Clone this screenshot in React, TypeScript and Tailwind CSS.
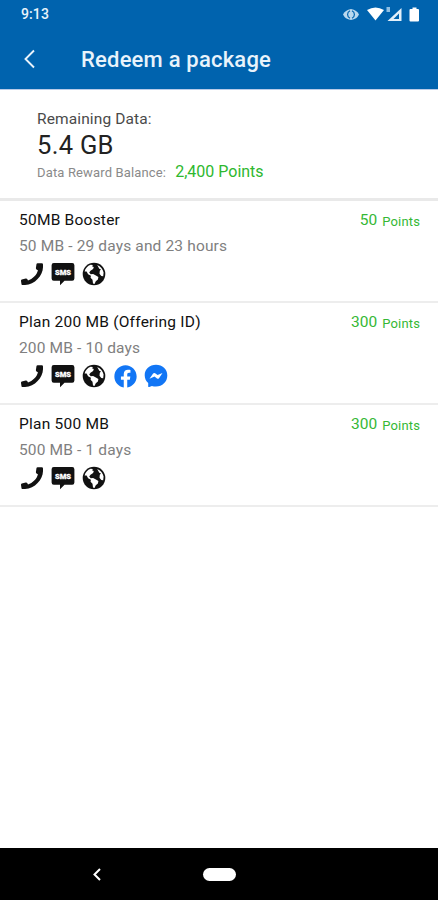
import { FaFacebook } from "react-icons/fa";

type Service = "call" | "sms" | "web" | "facebook" | "messenger";

interface Plan {
  name: string;
  details: string;
  points: number;
  services: Service[];
}

const plans: Plan[] = [
  {
    name: "50MB Booster",
    details: "50 MB - 29 days and 23 hours",
    points: 50,
    services: ["call", "sms", "web"],
  },
  {
    name: "Plan 200 MB (Offering ID)",
    details: "200 MB - 10 days",
    points: 300,
    services: ["call", "sms", "web", "facebook", "messenger"],
  },
  {
    name: "Plan 500 MB",
    details: "500 MB - 1 days",
    points: 300,
    services: ["call", "sms", "web"],
  },
];

const CallIcon = () => (
  <svg width="24" height="24" viewBox="0 0 24 24" fill="#111">
    <path d="M17.600 1.200 21.800 1.300q1.200 0 1.200 1.300v2.600C22.700 13.500 15 22.600 5 23l-2.300.1q-1 0-1.200-.9L1 19q-.2-1.100.8-1.400l4-1.100q.9-.2 1.400.6l.8 1.300C12.500 17.200 16.900 13 17.900 8.300l-1.400-.9q-.7-.5-.6-1.300l.6-4q.2-.9 1.100-.9z" />
  </svg>
);

const SmsIcon = () => (
  <svg width="24" height="24" viewBox="0 0 24 24">
    <path
      d="M2.800 1h18.400a2.200 2.200 0 0 1 2.200 2.200v13.300a2.200 2.200 0 0 1-2.200 2.200H13.500L9 23.200v-4.500H2.800a2.200 2.200 0 0 1-2.200-2.200V3.200A2.200 2.200 0 0 1 2.800 1z"
      fill="#111"
    />
    <text
      x="4"
      y="12.700"
      textLength="16"
      lengthAdjust="spacingAndGlyphs"
      fontSize="8"
      fontWeight="900"
      fill="#fff"
      stroke="#fff"
      strokeWidth="0.300"
      className="font-['Roboto',sans-serif]"
    >
      SMS
    </text>
  </svg>
);

const GlobeIcon = () => (
  <svg width="24" height="24" viewBox="0 0 24 24">
    <circle cx="12" cy="12" r="11.300" fill="#111" />
    <g fill="#fff">
      <path d="M2.600 9.500C3.300 6.500 5.500 3.900 8.600 2.800l2.200.2-.6 1.600 1.600.5-.7 2-2.600 1.600-1.300 1.900 1.500 1.700 2.400-.2 2.800 1.500 2.500 1.400-.5 2.600-2.100 1.600-1.300 2.900-1.500-.6-.5-3.700-1.900-2.100.3-2-2.800-1.500L4.600 9.400z" />
      <path d="M15.200 2.900C18.500 4.100 21 7.200 21.600 10.600l-.4 3.600-1.900-.3-1.800-2.200.3-2.900 1.200-1.300-1.700-.8z" />
    </g>
  </svg>
);

const MessengerIcon = () => (
  <svg width="24" height="24" viewBox="0 0 24 24">
    <path
      d="M12 .8C5.600.8.700 5.300.7 11.300c0 3.200 1.300 5.900 3.500 7.800v3.100q0 1.200 1.100.8l2.600-1.100c1.300.4 2.700.5 4.100.5 6.400 0 11.300-4.700 11.300-11S18.400.8 12 .8z"
      fill="#1276f5"
    />
    <path d="m5.500 14.700 3.600-5.200q.9-1 2-.3l2.500 1.900 4.900-2-3.500 5.100q-.9 1.100-2 .3L10.500 12.600z" fill="#fff" />
  </svg>
);

const ServiceIcon = ({ service }: { service: Service }) => {
  switch (service) {
    case "call":
      return <CallIcon />;
    case "sms":
      return <SmsIcon />;
    case "web":
      return <GlobeIcon />;
    case "facebook":
      return <FaFacebook size={23} color="#1276f5" />;
    case "messenger":
      return <MessengerIcon />;
  }
};

const StatusBar = () => (
  <div className="flex h-[29px] items-center justify-between pl-[21px] pr-[17px]">
    <span className="text-[14px] font-medium tracking-[0.1px]">9:13</span>
    <svg width="78" height="18" viewBox="0 0 78 18" fill="#fff">
      {/* eye */}
      <path d="M0 8.500q2-4.500 8-5.500 6 1 8 5.500-2 4.500-8 5.500-6-1-8-5.500z" fill="#b9d8ef" />
      <path d="M7 4.700a4.200 4.200 0 0 0 0 7.600M9 4.700a4.200 4.200 0 0 1 0 7.600" fill="none" stroke="#0063ae" strokeWidth="1.200" />
      {/* wifi */}
      <path d="M24 4q8.500-5 17 0L32.500 14.500z" />
      {/* signal */}
      <path d="M58.500 2v13H44.500z" fill="#e3f0fa" />
      <path d="M56 7.500V13h-5.500z" fill="#0063ae" />
      <path d="M43.500 1h3.500v5h-3.500z" fill="#8fbfe3" />
      {/* battery */}
      <path d="M67.500 3h2V1.500h4V3h1.500q1 0 1 1v10.500q0 1-1 1h-7.500q-1 0-1-1V4q0-1 1-1z" />
    </svg>
  </div>
);

const PlanRow = ({ plan }: { plan: Plan }) => (
  <div className="flex h-[102px] justify-between border-b-2 border-[#ededed] pl-[19px] pr-[18px] pt-[8px]">
    <div>
      <h2 className="text-[15.500px] leading-[22px] tracking-[0.230px] text-[#111]">{plan.name}</h2>
      <p className="mt-1 text-[15.500px] leading-[22px] tracking-[0.150px] text-[#808080]">{plan.details}</p>
      <div className="ml-px mt-[5px] flex gap-[7px]">
        {plan.services.map((service) => (
          <div key={service} className="flex size-6 items-center justify-center">
            <ServiceIcon service={service} />
          </div>
        ))}
      </div>
    </div>
    <p className="flex gap-[5px] text-[15.500px] leading-[22px] text-[#35b835]">
      <span>{plan.points}</span>
      <span className="mt-[2px] text-[13px] tracking-[0.150px]">Points</span>
    </p>
  </div>
);

const App = () => (
  <div className="flex h-[900px] w-[438px] flex-col bg-white font-['Roboto',sans-serif]">
    <header className="h-[90px] border-b border-[#b9cbe8] bg-[#0063ae] text-[#e9f3fb]">
      <StatusBar />
      <div className="flex h-[60px] items-center pl-[23px]">
        <svg width="13" height="20" viewBox="0 0 13 20" fill="none" stroke="currentColor" strokeWidth="1.900">
          <path d="M11 1.500 2.500 10l8.500 8.500" />
        </svg>
        <h1 className="ml-[45px] mt-px text-[22px] font-medium tracking-[0.200px]">Redeem a package</h1>
      </div>
    </header>
    <section className="h-[111px] border-b-[3px] border-[#e9e9e9] pl-[37px] pt-[19px]">
      <p className="text-[15.500px] leading-[20px] tracking-[0.120px] text-[#4a4a4a]">Remaining Data:</p>
      <p className="mt-px text-[25.500px] leading-[30px] tracking-[0.300px] text-[#222]">5.4 GB</p>
      <p className="flex items-baseline gap-[9px] text-[13px] leading-[24px] tracking-[0.150px] text-[#8a8a8a]">
        Data Reward Balance: <span className="text-[16px] tracking-normal text-[#2eb82e]">2,400 Points</span>
      </p>
    </section>
    <main className="flex-1">
      {plans.map((plan) => (
        <PlanRow key={plan.name} plan={plan} />
      ))}
    </main>
    <nav className="flex h-[52px] items-center bg-black">
      <svg className="ml-[92px]" width="10" height="13" viewBox="0 0 10 13" fill="none" stroke="#fff" strokeWidth="2">
        <path d="M8 1 2.500 6.500 8 12" />
      </svg>
      <div className="ml-[101px] h-[13px] w-[33px] rounded-full bg-white" />
    </nav>
  </div>
);

export default App;
